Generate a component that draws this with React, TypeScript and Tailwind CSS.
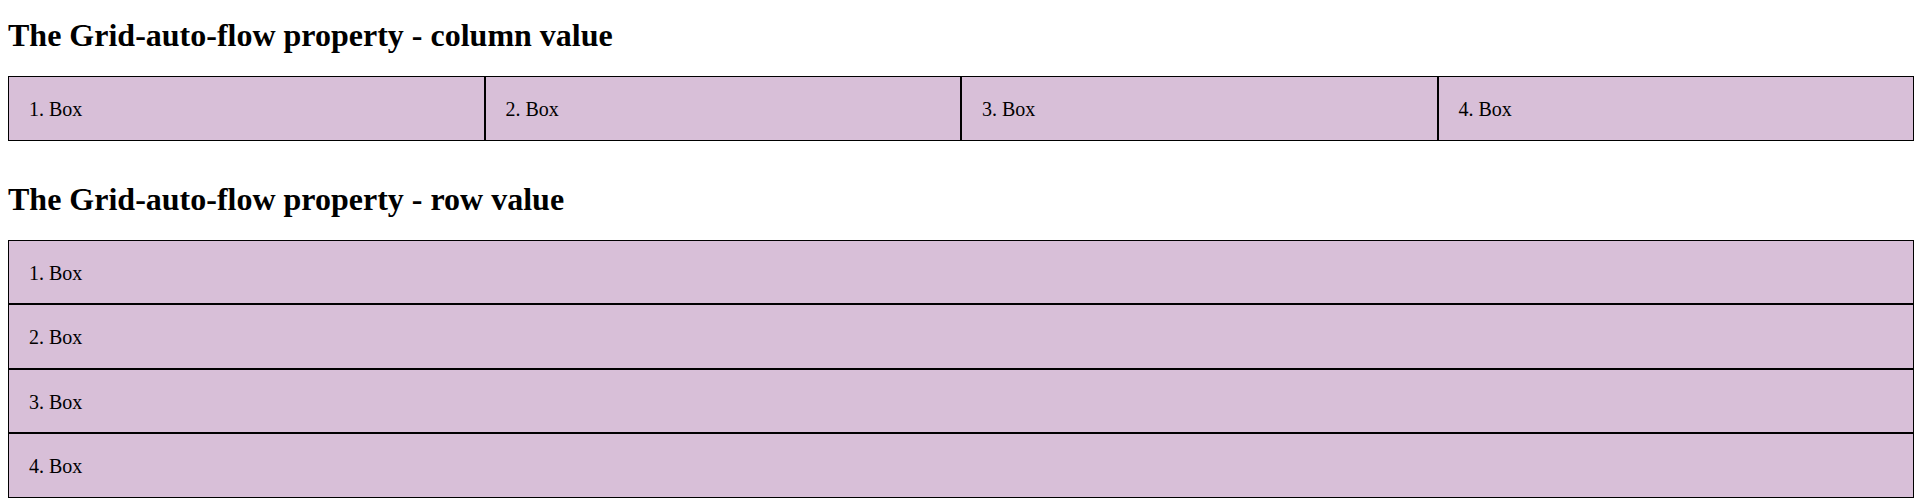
import React from "react";

const boxes = ["1. Box", "2. Box", "3. Box", "4. Box"];

function Box({ label }: { label: string }) {
  return (
    <div className="border border-black bg-[#d8bfd8] px-5 pt-[21px] pb-[19px] text-[20px] leading-[22.5px]">
      {label}
    </div>
  );
}

export default function App() {
  return (
    <div
      className="min-h-screen bg-white pl-2 pr-[3px] text-black"
      style={{ fontFamily: '"Liberation Serif", "Times New Roman", serif' }}
    >
      <h2 className="pt-[17px] pb-[22px] text-[32px] font-bold leading-[37px]">
        The Grid-auto-flow property - column value
      </h2>
      <div className="grid grid-flow-col auto-cols-fr">
        {boxes.map((b) => (
          <Box key={b} label={b} />
        ))}
      </div>

      <h2 className="pt-10 pb-[22px] text-[32px] font-bold leading-[37px]">
        The Grid-auto-flow property - row value
      </h2>
      <div className="grid grid-flow-row">
        {boxes.map((b) => (
          <Box key={b} label={b} />
        ))}
      </div>
    </div>
  );
}
